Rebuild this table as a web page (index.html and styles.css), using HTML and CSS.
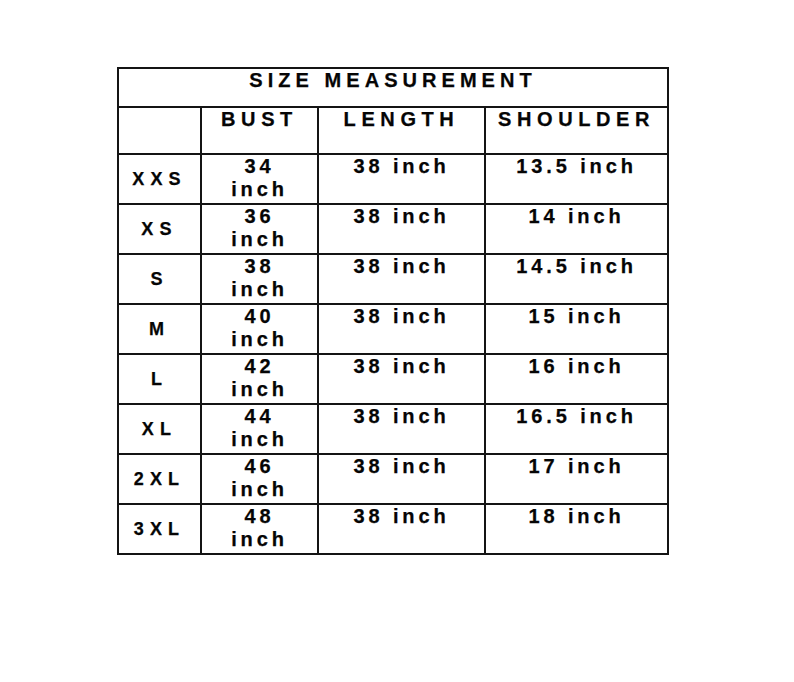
FILE: index.html
```html
<!DOCTYPE html>
<html>
<head>
<meta charset="utf-8">
<link rel="stylesheet" href="styles.css">
</head>
<body>
<div class="page">
<table class="size-table">
  <colgroup>
    <col class="c-size">
    <col class="c-bust">
    <col class="c-length">
    <col class="c-shoulder">
  </colgroup>
  <tr class="title-row"><th colspan="4" class="title">SIZE MEASUREMENT</th></tr>
  <tr class="head-row">
    <th class="blank"></th>
    <th class="head">BUST</th>
    <th class="head">LENGTH</th>
    <th class="head">SHOULDER</th>
  </tr>
  <tr class="data-row"><td class="size">XXS</td><td class="val">34<br>inch</td><td class="val">38 inch</td><td class="val">13.5 inch</td></tr>
  <tr class="data-row"><td class="size">XS</td><td class="val">36<br>inch</td><td class="val">38 inch</td><td class="val">14 inch</td></tr>
  <tr class="data-row"><td class="size">S</td><td class="val">38<br>inch</td><td class="val">38 inch</td><td class="val">14.5 inch</td></tr>
  <tr class="data-row"><td class="size">M</td><td class="val">40<br>inch</td><td class="val">38 inch</td><td class="val">15 inch</td></tr>
  <tr class="data-row"><td class="size">L</td><td class="val">42<br>inch</td><td class="val">38 inch</td><td class="val">16 inch</td></tr>
  <tr class="data-row"><td class="size">XL</td><td class="val">44<br>inch</td><td class="val">38 inch</td><td class="val">16.5 inch</td></tr>
  <tr class="data-row"><td class="size">2XL</td><td class="val">46<br>inch</td><td class="val">38 inch</td><td class="val">17 inch</td></tr>
  <tr class="data-row"><td class="size">3XL</td><td class="val">48<br>inch</td><td class="val">38 inch</td><td class="val">18 inch</td></tr>
</table>
</div>
</body>
</html>
```

FILE: styles.css
```css
html, body {
  margin: 0;
  padding: 0;
  background: #ffffff;
}

.page {
  padding: 67px 0 0 117px;
}

.size-table {
  border-collapse: collapse;
  table-layout: fixed;
  width: 550px;
  font-family: "Liberation Sans", Arial, sans-serif;
  font-weight: bold;
  color: #050505;
  -webkit-text-stroke: 0.25px #050505;
}

.c-size { width: 83px; }
.c-bust { width: 117px; }
.c-length { width: 167px; }
.c-shoulder { width: 183px; }

.size-table th,
.size-table td {
  border: 2px solid #141414;
  text-align: center;
  padding: 0;
  font-weight: bold;
}

.title-row { height: 39px; }
.head-row { height: 47px; }
.data-row { height: 50px; }

.title {
  font-size: 20px;
  letter-spacing: 5.05px;
  line-height: 23px;
  vertical-align: top;
  padding: 2px 0 0 5.05px;
}

.head {
  font-size: 20px;
  letter-spacing: 5.6px;
  line-height: 23px;
  vertical-align: top;
  padding: 1px 0 0 5.6px;
}

.val {
  font-size: 20px;
  letter-spacing: 3.9px;
  line-height: 23px;
  vertical-align: top;
  padding: 0 0 0 3.9px;
}

.size {
  font-size: 18px;
  letter-spacing: 6.2px;
  line-height: 22px;
  vertical-align: middle;
  padding: 0 0 0 6.2px;
}
```
